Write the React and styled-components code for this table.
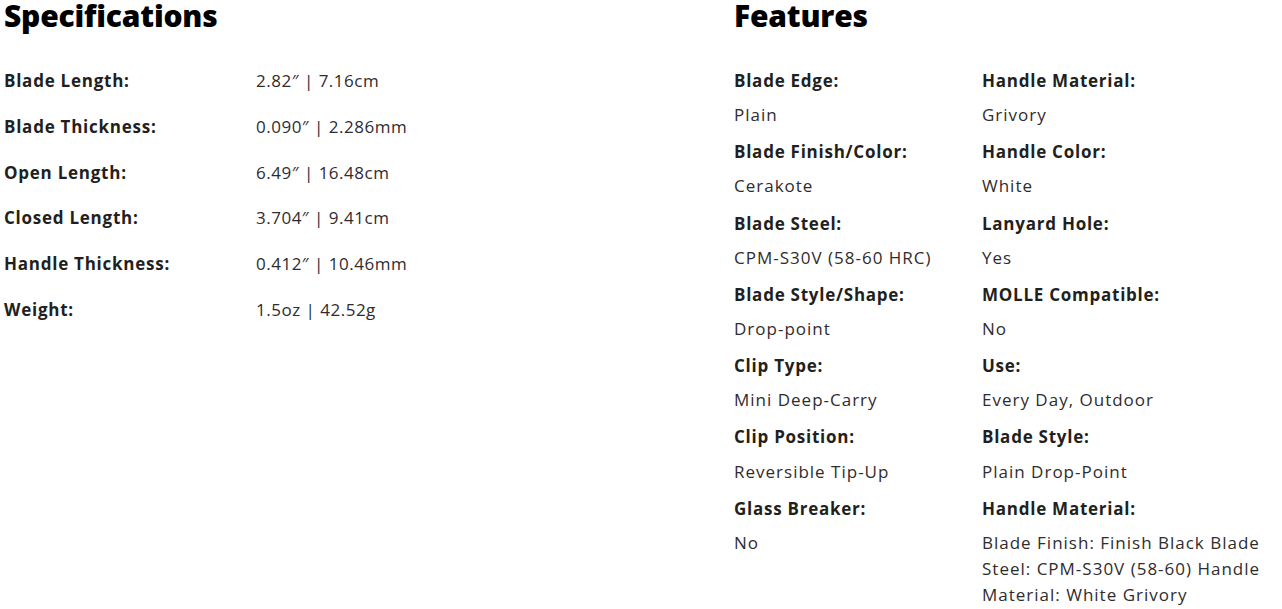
import React from "react";
import styled, { createGlobalStyle } from "styled-components";

const GlobalStyle = createGlobalStyle`
  body {
    margin: 0;
    background: #ffffff;
    font-family: "Open Sans", "Liberation Sans", sans-serif;
  }
`;

const specs = [
  ["Blade Length:", "2.82\u2033 | 7.16cm"],
  ["Blade Thickness:", "0.090\u2033 | 2.286mm"],
  ["Open Length:", "6.49\u2033 | 16.48cm"],
  ["Closed Length:", "3.704\u2033 | 9.41cm"],
  ["Handle Thickness:", "0.412\u2033 | 10.46mm"],
  ["Weight:", "1.5oz | 42.52g"],
];

const featuresLeft = [
  ["Blade Edge:", "Plain"],
  ["Blade Finish/Color:", "Cerakote"],
  ["Blade Steel:", "CPM-S30V (58-60 HRC)"],
  ["Blade Style/Shape:", "Drop-point"],
  ["Clip Type:", "Mini Deep-Carry"],
  ["Clip Position:", "Reversible Tip-Up"],
  ["Glass Breaker:", "No"],
];

const featuresRight = [
  ["Handle Material:", "Grivory"],
  ["Handle Color:", "White"],
  ["Lanyard Hole:", "Yes"],
  ["MOLLE Compatible:", "No"],
  ["Use:", "Every Day, Outdoor"],
  ["Blade Style:", "Plain Drop-Point"],
  [
    "Handle Material:",
    "Blade Finish: Finish Black Blade Steel: CPM-S30V (58-60) Handle Material: White Grivory",
  ],
];

function App() {
  return (
    <>
      <GlobalStyle />
      <Page>
        <Section>
          <Heading>Specifications</Heading>
          <SpecList>
            {specs.map(([label, value]) => (
              <SpecRow key={label}>
                <Label>{label}</Label>
                <Value $tight>{value}</Value>
              </SpecRow>
            ))}
          </SpecList>
        </Section>
        <Section>
          <Heading>Features</Heading>
          <FeatureGrid>
            {[featuresLeft, featuresRight].map((col, i) => (
              <FeatureColumn key={i}>
                {col.map(([label, value], j) => (
                  <FeatureItem key={j}>
                    <Label>{label}</Label>
                    <Value>{value}</Value>
                  </FeatureItem>
                ))}
              </FeatureColumn>
            ))}
          </FeatureGrid>
        </Section>
      </Page>
    </>
  );
}

const Page = styled.div`
  display: grid;
  grid-template-columns: 730px 1fr;
  padding-left: 4px;
`;

const Section = styled.section`
  display: flex;
  flex-direction: column;
`;

const Heading = styled.h2`
  margin: 0 0 36px;
  font-size: 30px;
  line-height: 32px;
  font-weight: 800;
  color: #000;
  letter-spacing: -0.2px;
`;

const SpecList = styled.div`
  display: flex;
  flex-direction: column;
  gap: 19.8px;
`;

const SpecRow = styled.div`
  display: grid;
  grid-template-columns: 252px 1fr;
`;

const Label = styled.div`
  font-size: 17px;
  line-height: 26px;
  font-weight: 700;
  color: #231f20;
  letter-spacing: 0.75px;
`;

const Value = styled.div`
  font-size: 17px;
  line-height: 26px;
  font-weight: 400;
  color: #2f2c2e;
  letter-spacing: ${(p) => (p.$tight ? "0.5px" : "1px")};
`;

const FeatureGrid = styled.div`
  display: grid;
  grid-template-columns: 248px 300px;
`;

const FeatureColumn = styled.div`
  display: flex;
  flex-direction: column;
  gap: 11.1px;
`;

const FeatureItem = styled.div`
  display: flex;
  flex-direction: column;
  gap: 8.2px;
`;

export default App;
